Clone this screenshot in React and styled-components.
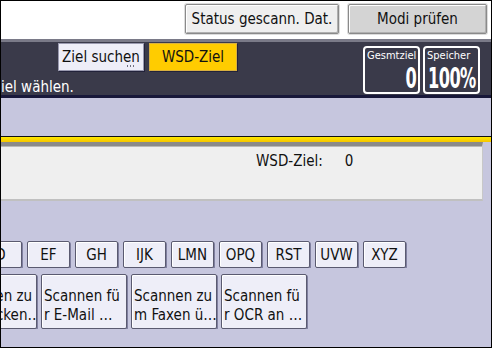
import React from "react";
import styled, { createGlobalStyle } from "styled-components";

const GlobalStyle = createGlobalStyle`
  html, body {
    margin: 0;
    padding: 0;
    background: #fff;
  }
  body {
    font-family: "DejaVu Sans Condensed", "DejaVu Sans", sans-serif;
    font-stretch: condensed;
  }
`;

const letters = ["D", "EF", "GH", "IJK", "LMN", "OPQ", "RST", "UVW", "XYZ"];

const scans = [
  ["Scannen zu", "m Drucken…"],
  ["Scannen fü", "r E-Mail …"],
  ["Scannen zu", "m Faxen ü…"],
  ["Scannen fü", "r OCR an …"],
];

const App = () => {
  return (
    <>
      <GlobalStyle />
      <Screen>
        <Header>
          <HeadButton light>Status gescann. Dat.</HeadButton>
          <HeadButton wide>Modi prüfen</HeadButton>
        </Header>

        <Band>
          <BandLeft>
            <TabRow>
              <Tab>
                Ziel suchen
                <Dots />
              </Tab>
              <Tab active>WSD-Ziel</Tab>
            </TabRow>
            <Hint>iel wählen.</Hint>
          </BandLeft>
          <Counters>
            <Counter>
              <CounterLabel>Gesmtziel</CounterLabel>
              <CounterValue>
                <span>0</span>
              </CounterValue>
            </Counter>
            <Counter>
              <CounterLabel>Speicher</CounterLabel>
              <CounterValue>
                <span>100%</span>
              </CounterValue>
            </Counter>
          </Counters>
        </Band>

        <Body>
          <Divider />
          <Panel>
            <PanelLine>
              <span>WSD-Ziel:</span>
              <span>0</span>
            </PanelLine>
          </Panel>

          <KeyRow>
            {letters.map((l, i) => (
              <KeyButton key={l} first={i === 0}>
                {l}
              </KeyButton>
            ))}
          </KeyRow>

          <ScanRow>
            {scans.map((s, i) => (
              <ScanButton key={i} first={i === 0}>
                <span>{s[0]}</span>
                <span>{s[1]}</span>
              </ScanButton>
            ))}
          </ScanRow>
        </Body>
      </Screen>
    </>
  );
};

const Screen = styled.div`
  width: 492px;
  height: 348px;
  box-sizing: border-box;
  border: 1px solid #000;
  display: flex;
  flex-direction: column;
  overflow: hidden;
  color: #111;
`;

const Header = styled.div`
  height: 38px;
  background: #fff;
  display: flex;
  justify-content: flex-end;
  align-items: flex-start;
  gap: 9px;
  padding: 3px 4px 0 0;
  box-sizing: border-box;
`;

const HeadButton = styled.div`
  width: ${(p) => (p.wide ? "139px" : "154px")};
  height: 30px;
  box-sizing: border-box;
  border: 1px solid #8a8a8a;
  border-radius: 2px;
  background: ${(p) => (p.light ? "#efefef" : "#d4d4d4")};
  box-shadow: inset 1px 1px 0 #fff, inset -1px -1px 0 #b0b0b0, 0 0 0 1px #dcdcdc;
  display: flex;
  align-items: center;
  justify-content: center;
  font-size: 15px;
  color: #111;
`;

const Band = styled.div`
  height: 59px;
  background: #3a3a4a;
  border-top: 3px solid #7a7a88;
  border-bottom: 3px solid #18183a;
  display: flex;
  box-sizing: border-box;
`;

const BandLeft = styled.div`
  width: 236px;
  display: flex;
  flex-direction: column;
`;

const TabRow = styled.div`
  display: flex;
  justify-content: flex-end;
  gap: 5px;
  padding-top: 1px;
`;

const Tab = styled.div`
  position: relative;
  height: 28px;
  width: ${(p) => (p.active ? "88px" : "86px")};
  box-sizing: border-box;
  display: flex;
  align-items: center;
  justify-content: center;
  font-size: 15px;
  color: #111;
  background: ${(p) => (p.active ? "#ffcc00" : "#eeeef8")};
  border: 1px solid ${(p) => (p.active ? "#d8b040" : "#9a9ab0")};
  box-shadow: 1px 1px 0 #22223a;
`;

const Dots = styled.span`
  position: absolute;
  right: 8px;
  bottom: 3px;
  width: 8px;
  height: 2px;
  background: repeating-linear-gradient(90deg, #707080 0 1px, transparent 1px 3px);
`;

const Hint = styled.div`
  margin-top: 7px;
  color: #fff;
  font-size: 15px;
  line-height: 18px;
  white-space: nowrap;
`;

const Counters = styled.div`
  margin-left: auto;
  margin-right: 11px;
  display: flex;
  gap: 3px;
  padding-top: 4px;
`;

const Counter = styled.div`
  width: 57px;
  height: 48px;
  box-sizing: border-box;
  border: 2px solid #fff;
  border-radius: 4px;
  display: flex;
  flex-direction: column;
  justify-content: space-between;
  padding: 1px 2px 0 2px;
  color: #fff;
`;

const CounterLabel = styled.div`
  font-size: 11px;
  line-height: 13px;
`;

const CounterValue = styled.div`
  display: flex;
  justify-content: flex-end;
  font-size: 29px;
  line-height: 28px;
  font-weight: bold;
  white-space: nowrap;

  span {
    flex: none;
    transform: scaleX(0.62);
    transform-origin: right center;
    letter-spacing: -1px;
  }
`;

const Body = styled.div`
  flex: 1;
  background: #c6c6de;
  display: flex;
  flex-direction: column;
  padding-top: 38px;
`;

const Divider = styled.div`
  height: 5px;
  border-top: 1px solid #111;
  background: linear-gradient(#ffe900, #f5c400);
`;

const Panel = styled.div`
  margin-right: 8px;
  height: 59px;
  box-sizing: border-box;
  background: #efefef;
  border-top: 4px solid #8a8a8a;
  border-right: 1px solid #c8c8c8;
  border-bottom: 2px solid #c0c0c0;
  box-shadow: inset 0 1px 0 #b8b8b8;
  padding: 6px 0 0 255px;
`;

const PanelLine = styled.div`
  display: flex;
  gap: 22px;
  font-size: 15px;
  line-height: 18px;
`;

const KeyRow = styled.div`
  display: flex;
  gap: 5px;
  margin-top: 40px;
  overflow: hidden;
`;

const ButtonBase = styled.div`
  flex: none;
  box-sizing: border-box;
  background: #eeeef8;
  border: 1px solid #5a5a70;
  border-radius: 2px;
  box-shadow: inset 1px 1px 0 #fff, 1px 1px 0 #8080a0;
  color: #111;
  font-size: 15px;
`;

const KeyButton = styled(ButtonBase)`
  width: 43px;
  height: 27px;
  margin-left: ${(p) => (p.first ? "-22px" : "0")};
  display: flex;
  align-items: center;
  justify-content: center;
`;

const ScanRow = styled.div`
  display: flex;
  gap: 4px;
  margin-top: 6px;
  overflow: hidden;
`;

const ScanButton = styled(ButtonBase)`
  width: 86px;
  height: 55px;
  margin-left: ${(p) => (p.first ? "-50px" : "0")};
  display: flex;
  flex-direction: column;
  justify-content: flex-end;
  padding: 0 0 3px 2px;
  line-height: 19px;
  white-space: nowrap;
  overflow: hidden;
`;

export default App;
